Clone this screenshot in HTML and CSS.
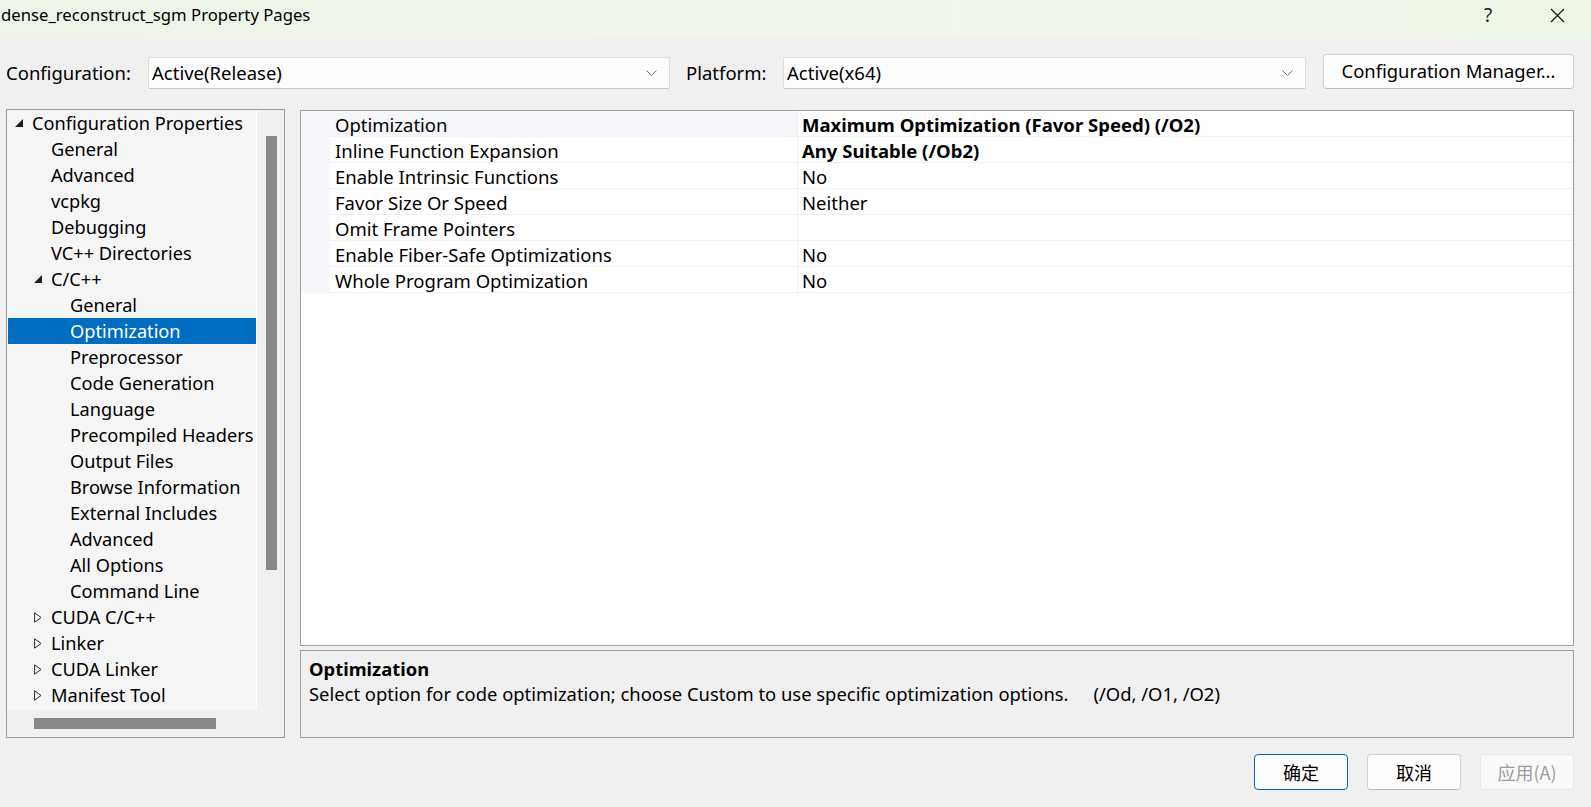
FILE: index.html
```html
<!DOCTYPE html>
<html lang="en">
<head>
<meta charset="utf-8">
<title>dense_reconstruct_sgm Property Pages</title>
<link rel="stylesheet" href="styles.css">
</head>
<body>
<div class="window">
  <header class="titlebar">
    <span class="title">dense_reconstruct_sgm Property Pages</span>
    <span class="help">?</span>
    <span class="close"><svg width="15" height="15" viewBox="0 0 15 15"><path d="M1 1 L14 14 M14 1 L1 14" stroke="#1a1a1a" stroke-width="1.3" fill="none"/></svg></span>
  </header>

  <div class="configbar">
    <label class="cfg-label cfg-label-config">Configuration:</label>
    <div class="combo combo-config">
      <span class="combo-text">Active(Release)</span>
      <svg class="chev" width="11" height="6" viewBox="0 0 11 6"><path d="M0.5 0.5 L5.5 5.5 L10.5 0.5" stroke="#707070" stroke-width="1" fill="none"/></svg>
    </div>
    <label class="cfg-label cfg-label-platform">Platform:</label>
    <div class="combo combo-platform">
      <span class="combo-text">Active(x64)</span>
      <svg class="chev" width="11" height="6" viewBox="0 0 11 6"><path d="M0.5 0.5 L5.5 5.5 L10.5 0.5" stroke="#707070" stroke-width="1" fill="none"/></svg>
    </div>
    <button class="btn btn-cfgmgr">Configuration Manager...</button>
  </div>

  <div class="main">
    <div class="tree">
      <div class="tree-body">
        <div class="tree-content">
          <div class="row l0"><span class="tog"><svg width="8" height="8" viewBox="0 0 8 8"><polygon points="8,0 8,8 0,8" fill="#1e1e1e"/></svg></span><span>Configuration Properties</span></div>
          <div class="row l1"><span class="tog"></span><span>General</span></div>
          <div class="row l1"><span class="tog"></span><span>Advanced</span></div>
          <div class="row l1"><span class="tog"></span><span>vcpkg</span></div>
          <div class="row l1"><span class="tog"></span><span>Debugging</span></div>
          <div class="row l1"><span class="tog"></span><span>VC++ Directories</span></div>
          <div class="row l1"><span class="tog"><svg width="8" height="8" viewBox="0 0 8 8"><polygon points="8,0 8,8 0,8" fill="#1e1e1e"/></svg></span><span>C/C++</span></div>
          <div class="row l2"><span class="tog"></span><span>General</span></div>
          <div class="row l2 selected"><span class="tog"></span><span>Optimization</span></div>
          <div class="row l2"><span class="tog"></span><span>Preprocessor</span></div>
          <div class="row l2"><span class="tog"></span><span>Code Generation</span></div>
          <div class="row l2"><span class="tog"></span><span>Language</span></div>
          <div class="row l2"><span class="tog"></span><span>Precompiled Headers</span></div>
          <div class="row l2"><span class="tog"></span><span>Output Files</span></div>
          <div class="row l2"><span class="tog"></span><span>Browse Information</span></div>
          <div class="row l2"><span class="tog"></span><span>External Includes</span></div>
          <div class="row l2"><span class="tog"></span><span>Advanced</span></div>
          <div class="row l2"><span class="tog"></span><span>All Options</span></div>
          <div class="row l2"><span class="tog"></span><span>Command Line</span></div>
          <div class="row l1"><span class="tog"><svg width="8" height="11" viewBox="0 0 8 11"><polygon points="0.6,0.8 7,5.5 0.6,10.2" fill="none" stroke="#2a2a2a" stroke-width="1"/></svg></span><span>CUDA C/C++</span></div>
          <div class="row l1"><span class="tog"><svg width="8" height="11" viewBox="0 0 8 11"><polygon points="0.6,0.8 7,5.5 0.6,10.2" fill="none" stroke="#2a2a2a" stroke-width="1"/></svg></span><span>Linker</span></div>
          <div class="row l1"><span class="tog"><svg width="8" height="11" viewBox="0 0 8 11"><polygon points="0.6,0.8 7,5.5 0.6,10.2" fill="none" stroke="#2a2a2a" stroke-width="1"/></svg></span><span>CUDA Linker</span></div>
          <div class="row l1"><span class="tog"><svg width="8" height="11" viewBox="0 0 8 11"><polygon points="0.6,0.8 7,5.5 0.6,10.2" fill="none" stroke="#2a2a2a" stroke-width="1"/></svg></span><span>Manifest Tool</span></div>
        </div>
        <div class="vscroll"><div class="vthumb"></div></div>
      </div>
      <div class="hscroll"><div class="hthumb"></div></div>
    </div>

    <div class="right">
      <div class="grid">
        <div class="prop selected"><span class="gut"></span><span class="pname">Optimization</span><span class="pval bold">Maximum Optimization (Favor Speed) (/O2)</span></div>
        <div class="prop"><span class="gut"></span><span class="pname">Inline Function Expansion</span><span class="pval bold">Any Suitable (/Ob2)</span></div>
        <div class="prop"><span class="gut"></span><span class="pname">Enable Intrinsic Functions</span><span class="pval">No</span></div>
        <div class="prop"><span class="gut"></span><span class="pname">Favor Size Or Speed</span><span class="pval">Neither</span></div>
        <div class="prop"><span class="gut"></span><span class="pname">Omit Frame Pointers</span><span class="pval"></span></div>
        <div class="prop"><span class="gut"></span><span class="pname">Enable Fiber-Safe Optimizations</span><span class="pval">No</span></div>
        <div class="prop"><span class="gut"></span><span class="pname">Whole Program Optimization</span><span class="pval">No</span></div>
      </div>
      <div class="desc">
        <div class="desc-title">Optimization</div>
        <div class="desc-text"><span>Select option for code optimization; choose Custom to use specific optimization options.</span><span class="desc-flags">(/Od, /O1, /O2)</span></div>
      </div>
    </div>
  </div>

  <div class="footer">
    <button class="btn btn-foot btn-ok">确定</button>
    <button class="btn btn-foot">取消</button>
    <button class="btn btn-foot btn-disabled">应用(A)</button>
  </div>
</div>
</body>
</html>
```

FILE: styles.css
```css
* { box-sizing: border-box; }
html, body { margin: 0; padding: 0; }
body {
  width: 1591px;
  height: 807px;
  overflow: hidden;
  background: #f0f0f0;
  font-family: "Noto Sans", "Noto Sans CJK SC", sans-serif;
  font-size: 18.5px;
  color: #000;
}
.window { width: 1591px; height: 807px; display: flex; flex-direction: column; }

.titlebar {
  height: 38px;
  display: flex;
  align-items: center;
  background: linear-gradient(90deg, #eef4e8 0%, #f0f6ea 60%, #eef6e8 100%);
  padding-left: 1px;
}
.title { font-size: 16.7px; flex: 1; line-height: 1; padding-bottom: 7px; }
.help { width: 18px; margin-right: 48px; font-size: 19px; line-height: 1; padding-bottom: 8px; color: #1a1a1a; }
.close { width: 15px; height: 15px; margin-right: 26px; margin-bottom: 8px; display: flex; }

.configbar {
  display: flex;
  align-items: flex-end;
  padding-top: 16px;
  height: 51px;
}
.cfg-label { line-height: 32px; height: 32px; font-size: 18.5px; }
.cfg-label-config { margin-left: 6px; width: 142px; }
.cfg-label-platform { margin-left: 16px; width: 97px; }
.combo {
  height: 32px;
  background: #fdfdfd;
  border: 1px solid #dcdcdc;
  border-bottom-color: #c8c8c8;
  border-radius: 2px;
  display: flex;
  align-items: center;
  justify-content: space-between;
  padding: 0 12px 0 3px;
}
.combo-config { width: 522px; }
.combo-platform { width: 523px; }
.combo-text { font-size: 18.5px; padding-bottom: 1px; }
.btn {
  font-family: "Noto Sans", "Noto Sans CJK SC", sans-serif;
  background: #fdfdfd;
  border: 1px solid #d0d0d0;
  border-bottom-color: #bdbdbd;
  border-radius: 4px;
  color: #000;
  padding: 0;
}
.btn-cfgmgr { margin-left: 17px; width: 251px; height: 35px; font-size: 18.4px; padding-bottom: 3px; }

.main { display: flex; margin-top: 20px; height: 629px; }
.tree {
  margin-left: 6px;
  width: 279px;
  height: 629px;
  border: 1px solid #9a9a9a;
  background: #f0f0f0;
  display: flex;
  flex-direction: column;
}
.tree-body { display: flex; height: 600px; }
.tree-content {
  width: 250px;
  background: #f5f5f5;
  border-right: 1px solid #ffffff;
  overflow: hidden;
}
.row {
  height: 26px;
  display: flex;
  align-items: center;
  margin-left: 1px;
  white-space: nowrap;
  font-size: 18.2px;
  line-height: 1;
}
.row .tog { width: 17px; display: flex; align-items: center; height: 26px; }
.row.l0 { padding-left: 7px; }
.row.l1 { padding-left: 26px; }
.row.l2 { padding-left: 45px; }
.row span:last-child { padding-bottom: 0; }
.row.selected { background: #006dc1; color: #fff; }
.vscroll { width: 27px; position: relative; padding-top: 26px; display: flex; justify-content: center; }
.vthumb { width: 11px; height: 434px; background: #888888; margin-left: 1px; }
.hscroll { height: 27px; padding-top: 8px; padding-left: 27px; }
.hthumb { width: 182px; height: 11px; background: #888888; }

.right { margin-left: 15px; width: 1274px; padding-top: 1px; display: flex; flex-direction: column; }
.grid {
  height: 536px;
  border: 1px solid #a0a0a0;
  background: #fff;
}
.prop {
  display: flex;
  height: 26px;
  align-items: stretch;
  white-space: nowrap;
  font-size: 18.5px;
  line-height: 1;
}
.prop .gut { width: 29px; background: #f5f7fb; flex: none; }
.prop .pname {
  width: 468px;
  flex: none;
  padding-left: 5px;
  border-bottom: 1px solid #f0f0f3;
  border-right: 1px solid #f0f0f3;
  display: flex; align-items: center;
  padding-top: 3px;
}
.prop .pval {
  flex: 1;
  padding-left: 4px;
  border-bottom: 1px solid #f0f0f3;
  display: flex; align-items: center;
  padding-top: 3px;
}
.prop.selected .pname { background: #f5f7fb; }
.bold { font-weight: 700; }

.desc {
  margin-top: 4px;
  height: 88px;
  border: 1px solid #a0a0a0;
  background: #f0f0f0;
  padding: 6px 8px;
}
.desc-title { font-weight: 700; font-size: 18.4px; line-height: 24px; }
.desc-text { font-size: 18.4px; line-height: 26px; white-space: nowrap; }
.desc-flags { margin-left: 25px; }

.footer { display: flex; justify-content: flex-end; padding-right: 17px; margin-top: 16px; gap: 19px; }
.btn-foot { width: 94px; height: 36px; font-size: 18px; font-family: "Noto Sans CJK SC", "Noto Sans", sans-serif; }
.btn-ok { border-color: #0067c0; }
.btn-disabled { background: #f9f9f9; border-color: #e6e6e6; color: #9d9d9d; }
```
